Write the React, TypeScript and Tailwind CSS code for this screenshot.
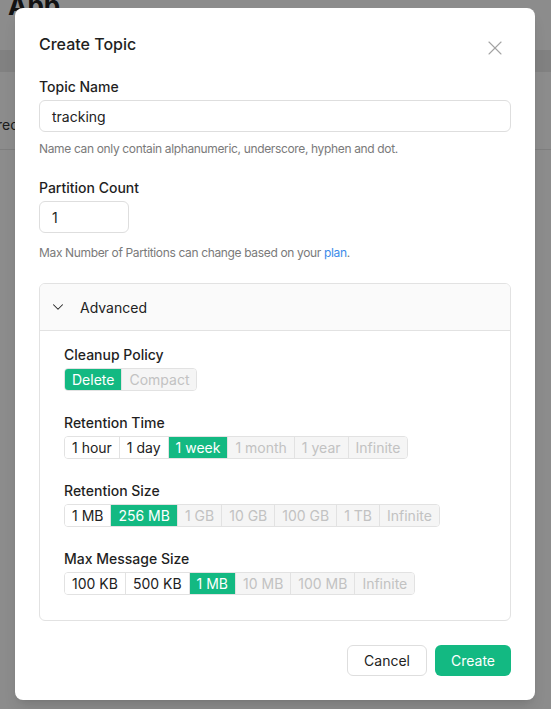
import { X, ChevronDown } from "lucide-react";

type Opt = { label: string; disabled?: boolean };

const groups: { title: string; selected: string; options: Opt[] }[] = [
  {
    title: "Cleanup Policy",
    selected: "Delete",
    options: [{ label: "Delete" }, { label: "Compact", disabled: true }],
  },
  {
    title: "Retention Time",
    selected: "1 week",
    options: [
      { label: "1 hour" },
      { label: "1 day" },
      { label: "1 week" },
      { label: "1 month", disabled: true },
      { label: "1 year", disabled: true },
      { label: "Infinite", disabled: true },
    ],
  },
  {
    title: "Retention Size",
    selected: "256 MB",
    options: [
      { label: "1 MB" },
      { label: "256 MB" },
      { label: "1 GB", disabled: true },
      { label: "10 GB", disabled: true },
      { label: "100 GB", disabled: true },
      { label: "1 TB", disabled: true },
      { label: "Infinite", disabled: true },
    ],
  },
  {
    title: "Max Message Size",
    selected: "1 MB",
    options: [
      { label: "100 KB" },
      { label: "500 KB" },
      { label: "1 MB" },
      { label: "10 MB", disabled: true },
      { label: "100 MB", disabled: true },
      { label: "Infinite", disabled: true },
    ],
  },
];

function Segmented({ options, selected }: { options: Opt[]; selected: string }) {
  return (
    <div className="flex w-fit overflow-hidden rounded-[4px] border border-[#e2e2e2]">
      {options.map((o, i) => {
        const active = o.label === selected;
        return (
          <span
            key={o.label}
            className={`px-[7px] text-[14px] leading-[21px] ${i > 0 ? "border-l border-[#e2e2e2]" : ""} ${
              active
                ? "border-[#13b982] bg-[#13b982] text-white"
                : o.disabled
                  ? "bg-[#f5f5f5] text-[#c2c2c2]"
                  : "bg-white text-[#222]"
            }`}
          >
            {o.label}
          </span>
        );
      })}
    </div>
  );
}

export default function App() {
  return (
    <div
      className="relative h-[709px] w-[551px] overflow-hidden bg-white text-[#1f1f1f]"
      style={{ fontFamily: "Inter, 'Noto Sans', sans-serif" }}
    >
      {/* page underneath */}
      <div className="flex h-[50px] items-start">
        <div className="-mt-[14px] pl-[8px] text-[26px] font-bold text-[#222]">App</div>
      </div>
      <div className="h-[22px] bg-[#ececec]" />
      <div className="flex h-[78px] items-end border-b border-[#e6e6e6] pb-[14px] text-[14px] text-[#333]">
        <span className="-ml-[3px]">rec</span>
      </div>

      {/* overlay */}
      <div className="absolute inset-0 bg-black/45" />

      {/* modal */}
      <div className="absolute left-[15px] top-[8px] w-[520px] rounded-[8px] bg-white px-[24px] pb-[24px] pt-[26px] shadow-lg">
        <div className="flex items-start justify-between">
          <h2 className="text-[16px] font-medium leading-[20px] text-[#1f1f1f]">Create Topic</h2>
          <button className="mr-[4px] mt-[2px] text-[#a3a3a3]">
            <X size={24} strokeWidth={1.1} />
          </button>
        </div>

        <div className="mt-[18px]">
          <label className="block text-[14px] font-medium leading-[18px]">Topic Name</label>
          <div className="mt-[4px] flex h-[32px] items-center rounded-[6px] border border-[#dedede] px-[12px] text-[14px] text-[#222]">
            tracking
          </div>
          <p className="mt-[9px] text-[12px] leading-[16px] tracking-[-0.35px] text-[#7a7a7a]">
            Name can only contain alphanumeric, underscore, hyphen and dot.
          </p>
        </div>

        <div className="mt-[22px]">
          <label className="block text-[14px] font-medium leading-[18px]">Partition Count</label>
          <div className="mt-[4px] flex h-[32px] w-[90px] items-center rounded-[6px] border border-[#dedede] px-[12px] text-[14px] text-[#222]">
            1
          </div>
          <p className="mt-[12px] text-[12px] leading-[16px] tracking-[-0.35px] text-[#7a7a7a]">
            Max Number of Partitions can change based on your{" "}
            <span className="text-[#3b8bea]">plan</span>.
          </p>
        </div>

        <div className="mt-[22px] overflow-hidden rounded-[6px] border border-[#e2e2e2]">
          <div className="flex h-[47px] items-center gap-[13px] border-b border-[#e2e2e2] bg-[#fafafa] pl-[9px] text-[14px] text-[#222]">
            <ChevronDown size={18} strokeWidth={1.4} />
            <span>Advanced</span>
          </div>
          <div className="flex flex-col gap-[23px] px-[24px] pb-[25px] pt-[15px]">
            {groups.map((g) => (
              <div key={g.title}>
                <div className="mb-[4px] text-[14px] font-medium leading-[18px] text-[#1f1f1f]">{g.title}</div>
                <Segmented options={g.options} selected={g.selected} />
              </div>
            ))}
          </div>
        </div>

        <div className="mt-[24px] flex justify-end gap-[8px]">
          <button className="h-[31px] rounded-[6px] border border-[#dedede] bg-white px-[16px] text-[14px] text-[#222]">
            Cancel
          </button>
          <button className="h-[31px] rounded-[6px] bg-[#13b982] px-[16px] text-[14px] text-white">
            Create
          </button>
        </div>
      </div>
    </div>
  );
}
